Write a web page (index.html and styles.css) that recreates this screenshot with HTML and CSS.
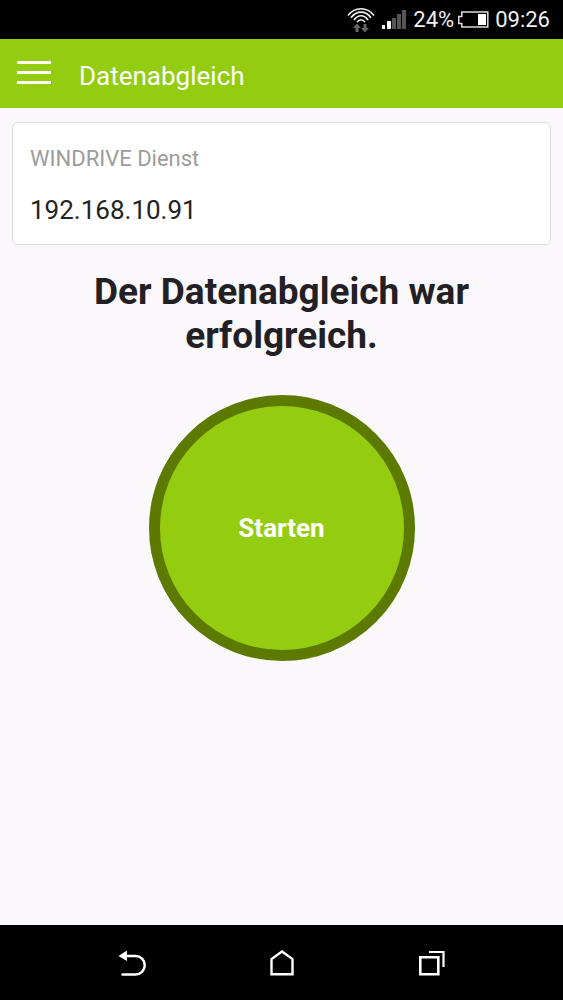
FILE: index.html
```html
<!DOCTYPE html>
<html lang="de">
<head>
<meta charset="utf-8">
<meta name="viewport" content="width=device-width, initial-scale=1">
<title>Datenabgleich</title>
<link rel="stylesheet" href="styles.css">
</head>
<body>
<div class="statusbar">
  <svg class="wifi" width="28" height="28" viewBox="0 0 28 28" aria-hidden="true">
    <g fill="none" stroke="#eee" stroke-width="1.700">
      <path d="M1 9.500C8 0.500 20 0.500 27 9.500"/>
      <path d="M4 11.800C9.500 4.300 18.500 4.300 24 11.800"/>
      <path d="M7 14C11 8.300 17 8.300 21 14"/>
      <path d="M10 16Q14 11.500 18 16"/>
    </g>
    <path fill="#666" d="M10 17.500l4 4.500h-2.500v4h-3v-4h-2.500zM18 26.500l4-4.500h-2.500v-4h-3v4h-2.500z"/>
  </svg>
  <svg class="signal" width="26" height="20" viewBox="0 0 26 20" aria-hidden="true">
    <path fill="#fff" d="M1 15h3v4h-3zM6 11h4v8h-4z"/>
    <path fill="#555" d="M11 8h4v11h-4zM16 4h4v15h-4zM21 0h4v19h-4z"/>
  </svg>
  <span>24%</span>
  <svg class="battery" width="31" height="18" viewBox="0 0 31 18" aria-hidden="true">
    <path fill="none" stroke="#ddd" stroke-width="1.500" d="M3.800 1h26v15h-26v-3.500h-3v-7h3z"/>
    <path fill="#fff" d="M20 3h8v11h-8z"/>
  </svg>
  <time>09:26</time>
</div>
<header class="appbar">
  <button class="menu" type="button" aria-label="Menü">
    <svg width="34" height="24" viewBox="0 0 34 24" aria-hidden="true">
      <path fill="#fff" d="M0 0h34v3h-34zM0 10h34v3h-34zM0 20h34v3h-34z"/>
    </svg>
  </button>
  <h1 class="title">Datenabgleich</h1>
</header>
<main class="content">
  <div class="card">
    <label class="label" for="service">WINDRIVE Dienst</label>
    <input class="field" id="service" type="text" value="192.168.10.91">
  </div>
  <h2 class="message">Der Datenabgleich war erfolgreich.</h2>
  <button class="start" type="button">Starten</button>
</main>
<nav class="navbar">
  <button class="key" type="button" aria-label="Zurück">
    <svg width="28" height="28" viewBox="0 0 28 28" aria-hidden="true">
      <path fill="#fff" d="M0.500 7l8.500-5.500v10.500z"/>
      <path fill="none" stroke="#fff" stroke-width="2.500" stroke-linecap="round" d="M7 7h10.500a9 9 0 0 1 0 18.500h-13"/>
    </svg>
  </button>
  <button class="key" type="button" aria-label="Startseite">
    <svg width="28" height="28" viewBox="0 0 28 28" aria-hidden="true">
      <path fill="none" stroke="#fff" stroke-width="2.400" d="M3.500 25.300v-15.300l10.500-7.500 10.500 7.500v15.300z"/>
    </svg>
  </button>
  <button class="key" type="button" aria-label="Letzte Apps">
    <svg width="28" height="28" viewBox="0 0 28 28" aria-hidden="true">
      <path fill="none" stroke="#fff" stroke-width="2.600" d="M2.300 8.300h18v17h-18z"/>
      <path fill="none" stroke="#fff" stroke-width="2.200" d="M11 3h14.500v15"/>
    </svg>
  </button>
</nav>
</body>
</html>
```
FILE: styles.css
```css
* {
  box-sizing: border-box;
}

body {
  margin: 0;
  min-height: 100vh;
  display: flex;
  flex-direction: column;
  background: #faf8fb;
  color: #222024;
  font-family: Roboto, "Liberation Sans", sans-serif;
}

button {
  padding: 0;
  border: 0;
  background: none;
  font: inherit;
  cursor: pointer;
}

svg {
  display: block;
}

.statusbar {
  display: flex;
  align-items: center;
  justify-content: flex-end;
  gap: 6px;
  height: 39px;
  padding: 0 13px;
  background: #000;
  color: #f0f0f0;
  font-size: 22px;
  line-height: 42px;
}

.battery {
  margin-left: -2px;
}

.appbar {
  display: flex;
  align-items: center;
  gap: 28px;
  height: 69px;
  padding: 0 17px;
  background: #94cc0f;
  color: #fff;
}

.menu {
  padding-bottom: 2px;
}

.title {
  margin: 0;
  padding-top: 4px;
  font-size: 26px;
  font-weight: 400;
  line-height: 32px;
}

.content {
  flex: 1;
  display: flex;
  flex-direction: column;
  align-items: center;
  padding: 14px 12px;
}

.card {
  display: flex;
  flex-direction: column;
  gap: 19px;
  width: 100%;
  padding: 20px 17px 18px;
  border: 1px solid #dcdade;
  border-radius: 6px;
  background: #fff;
}

.label {
  color: #9c9c9c;
  font-size: 22px;
  line-height: 32px;
}

.field {
  width: 100%;
  padding: 0;
  border: 0;
  outline: 0;
  background: none;
  color: #222;
  font: inherit;
  font-size: 26px;
  line-height: 32px;
}

.message {
  max-width: 450px;
  margin: 25px 0 37px;
  font-size: 37px;
  font-weight: 700;
  line-height: 44px;
  text-align: center;
}

.start {
  width: 266px;
  height: 266px;
  border: 11px solid #5c7a00;
  border-radius: 50%;
  background: #94cc0f;
  color: #fff;
  font-size: 26px;
  font-weight: 700;
}

.navbar {
  display: flex;
  justify-content: center;
  height: 75px;
  background: #000;
}

.key {
  display: flex;
  align-items: center;
  justify-content: center;
  width: 150px;
}
```
